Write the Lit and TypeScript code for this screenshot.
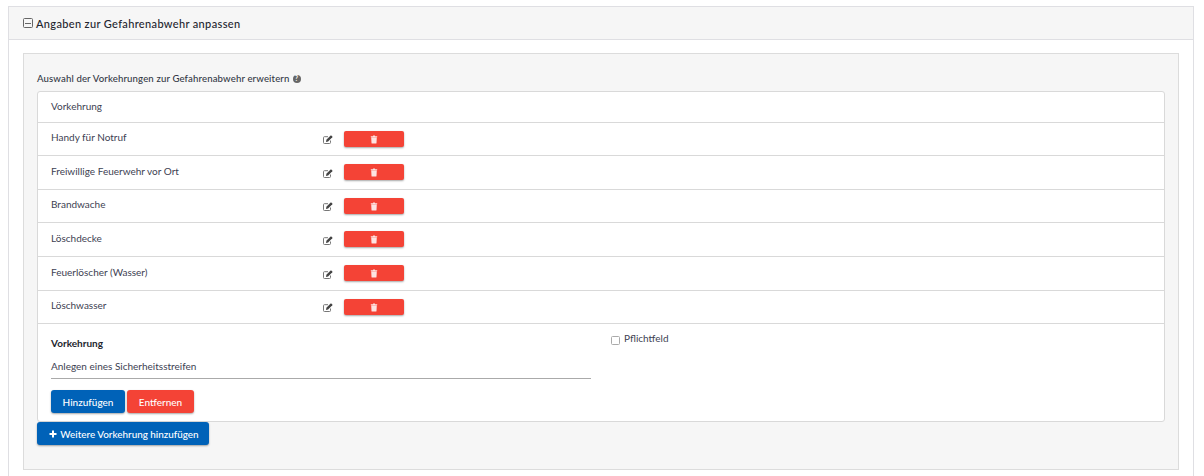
import { LitElement, html, css, svg } from "lit";
import { customElement } from "lit/decorators.js";

const rows = [
  { name: "Handy für Notruf", tall: false },
  { name: "Freiwillige Feuerwehr vor Ort", tall: true },
  { name: "Brandwache", tall: false },
  { name: "Löschdecke", tall: true },
  { name: "Feuerlöscher (Wasser)", tall: true },
  { name: "Löschwasser", tall: false },
];

const editIcon = svg`<svg class="edit" viewBox="0 0 10 9" width="10" height="9">
  <path d="M7.5 5.5V7.6a.9.9 0 0 1-.9.9H1.4a.9.9 0 0 1-.9-.9V2.6a.9.9 0 0 1 .9-.9H5" fill="none" stroke="#777" stroke-width="1"/>
  <path d="M3.4 4.8 7.6.6a.5.5 0 0 1 .7 0l1 1a.5.5 0 0 1 0 .7L5.1 6.5 3 6.9z" fill="#444"/>
</svg>`;

const trashIcon = svg`<svg viewBox="0 0 8 9" width="8" height="9">
  <path d="M.8 1.3h2l.4-.8h1.6l.4.8h2v.9H.8zM1.2 2.6h5.6l-.3 5.4a.6.6 0 0 1-.6.5H2.1a.6.6 0 0 1-.6-.5z" fill="#fde3e1"/>
</svg>`;

@customElement("app-root")
export class AppRoot extends LitElement {
  static styles = css`
    :host { display: block; height: 476px; overflow: hidden; background: #fff; color: #3d4152;
      font-family: "Lato", "Open Sans", sans-serif; font-size: 10px; padding: 6px 10px 0 8px; box-sizing: border-box; }
    .panel { border: 1px solid #dfdfe3; border-bottom: 0; height: 470px; box-sizing: border-box; }
    .panel-head { height: 32px; background: #f6f6f6; border-bottom: 1px solid #dfdfe3; display: flex; align-items: center;
      padding-left: 14px; gap: 3px; font-size: 11px; font-weight: 500; letter-spacing: .35px; color: #23252e; }
    .minus { width: 8px; height: 8px; border: 1px solid #666; border-radius: 1.5px; position: relative; flex: none; }
    .minus::after { content: ""; position: absolute; left: 1px; right: 1px; top: 3.5px; height: 1px; background: #666; }
    .panel-body { padding: 13px 14px 0; }
    .well { background: #f6f6f6; border: 1px solid #dcdcdc; height: 417px; box-sizing: border-box; padding: 14px 13px 0; }
    .title { display: flex; align-items: center; gap: 3px; height: 21px; padding-bottom: 2px; font-size: 9.6px; font-weight: 500; letter-spacing: .13px; color: #333845; }
    .help { width: 8px; height: 8px; border-radius: 50%; background: #666; color: #fff; font-size: 6.5px; line-height: 8px; text-align: center; font-weight: 700; letter-spacing: 0; margin-top: 1px; }
    .list { background: #fff; border: 1px solid #d9d9d9; border-radius: 3px; }
    .row { display: flex; align-items: flex-start; height: 32px; border-bottom: 1px solid #d9d9d9; padding-left: 13px; }
    .row.tall { height: 33px; }
    .row.head { height: 30px; }
    .name { width: 272px; flex: none; margin-top: 8px; }
    .tall .name { margin-top: 9px; }
    .head .name { margin-top: 8px; }
    .edit { display: block; margin: 11.5px 11px 0 0; flex: none; }
    .tall .edit { margin-top: 12.5px; }
    .del { width: 60px; height: 16px; margin-top: 8px; background: #f44336; border-radius: 2px; box-shadow: 0 1px 2px rgba(0,0,0,.35);
      display: flex; align-items: center; justify-content: center; }
    .form { display: flex; height: 97px; padding-left: 13px; }
    .left { width: 540px; flex: none; padding-top: 12px; }
    .label { font-weight: 700; color: #23252e; height: 14px; line-height: 14px; }
    .input { margin-top: 7px; height: 21px; line-height: 19px; border-bottom: 1px solid #aaa; }
    .btns { display: flex; gap: 2px; margin-top: 11px; }
    .btn { height: 23px; border-radius: 3px; color: #fff; font-size: 10px; font-weight: 500; display: flex; align-items: center; justify-content: center;
      box-shadow: 0 1px 2px rgba(0,0,0,.35); box-sizing: border-box; }
    .blue { background: #0062b8; }
    .red { background: #f44336; }
    .add { width: 74px; }
    .rem { width: 67px; }
    .check { margin: 8px 0 0 20px; display: flex; align-items: flex-start; gap: 4px; height: 14px; }
    .box { width: 7px; height: 7px; border: 1px solid #aaa; border-radius: 1.5px; background: #fff; margin-top: 4px; }
    .more { width: 172px; gap: 3px; padding-left: 2px; font-size: 9.9px; }
  `;

  render() {
    return html`
      <div class="panel">
        <div class="panel-head"><span class="minus"></span>Angaben zur Gefahrenabwehr anpassen</div>
        <div class="panel-body">
          <div class="well">
            <div class="title">Auswahl der Vorkehrungen zur Gefahrenabwehr erweitern <span class="help">?</span></div>
            <div class="list">
              <div class="row head"><span class="name">Vorkehrung</span></div>
              ${rows.map((r) => html`<div class="row ${r.tall ? "tall" : ""}"><span class="name">${r.name}</span>${editIcon}<span class="del">${trashIcon}</span></div>`)}
              <div class="form">
                <div class="left">
                  <div class="label">Vorkehrung</div>
                  <div class="input">Anlegen eines Sicherheitsstreifen</div>
                  <div class="btns"><span class="btn blue add">Hinzufügen</span><span class="btn red rem">Entfernen</span></div>
                </div>
                <div class="check"><span class="box"></span>Pflichtfeld</div>
              </div>
            </div>
            <div class="btn blue more">
              <svg viewBox="0 0 8 8" width="8" height="8"><path d="M3 .5h2V3h2.5v2H5v2.5H3V5H.5V3H3z" fill="#fff"/></svg>
              Weitere Vorkehrung hinzufügen
            </div>
          </div>
        </div>
      </div>
    `;
  }
}
